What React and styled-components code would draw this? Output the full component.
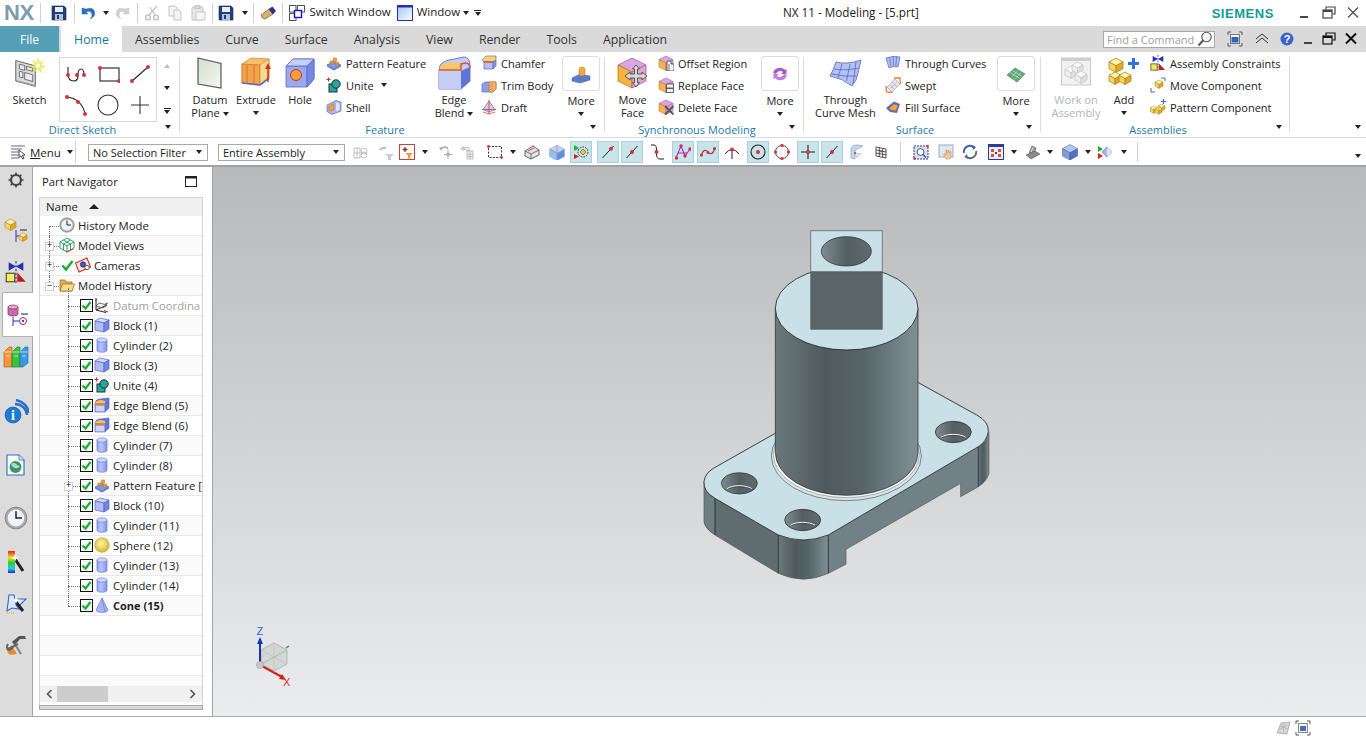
import React from 'react';
import styled, { createGlobalStyle } from 'styled-components';

const GlobalStyle = createGlobalStyle`
    html, body { margin: 0; padding: 0; background: #fff; }
    body { font-family: "Open Sans", "Liberation Sans", sans-serif; font-size: 11px; color: #222; }
    #root { width: 1366px; height: 738px; overflow: hidden; }
`;

const Page = styled.div`
    width: 1366px;
    height: 738px;
    display: flex;
    flex-direction: column;
    background: #fff;
`;

/* ---------- title bar ---------- */
const TitleBar = styled.div`
    height: 26px;
    display: flex;
    align-items: center;
`;
const QuickAccess = styled.div`
    flex: 0 0 783px;
    display: flex;
    align-items: center;
    height: 26px;
`;
const Logo = styled.span`
    width: 40px;
    padding-left: 4px;
    box-sizing: border-box;
    font: bold 22px "Liberation Sans", sans-serif;
    color: #7f9bae;
    letter-spacing: -0.5px;
`;
const Slot = styled.span`
    flex: 0 0 auto;
    display: flex;
    align-items: center;
    justify-content: center;
    width: ${p => p.$w}px;
    margin-left: ${p => p.$ml || 0}px;
`;
const VSep = styled.span`
    flex: 0 0 1px;
    width: 1px;
    height: ${p => p.$h || 20}px;
    background: #d0d0d0;
    margin-left: ${p => p.$ml || 0}px;
`;
const Caret = styled.span`
    flex: 0 0 auto;
    display: inline-block;
    width: 0;
    height: 0;
    border-left: 3.5px solid transparent;
    border-right: 3.5px solid transparent;
    border-top: 4px solid ${p => p.$color || '#222'};
    margin-left: ${p => p.$ml || 0}px;
`;
const QatText = styled.span`
    font-size: 11.5px;
    margin-left: ${p => p.$ml || 0}px;
    padding-bottom: 3px;
    white-space: nowrap;
`;
const MenuCaret = styled.span`
    display: flex;
    flex-direction: column;
    align-items: center;
    margin-left: 5px;
    &::before {
        content: '';
        width: 7px;
        height: 1px;
        background: #222;
        margin-bottom: 1px;
    }
`;
const WindowTitle = styled.span`
    font-size: 11.7px;
    padding-bottom: 2px;
    white-space: nowrap;
`;
const Siemens = styled.span`
    margin-left: auto;
    font: bold 13px "Liberation Sans", sans-serif;
    letter-spacing: 0.55px;
    color: #129a9c;
`;
const WinButtons = styled.div`
    display: flex;
    align-items: center;
    margin-left: 24px;
    margin-right: 6px;
    gap: 10px;
`;

/* ---------- tabs ---------- */
const TabBar = styled.div`
    height: 26px;
    background: #dadada;
    display: flex;
    align-items: stretch;
`;
const FileTab = styled.div`
    width: 59px;
    margin-right: 2px;
    background: #559fb7;
    color: #fff;
    font-size: 12px;
    display: flex;
    align-items: center;
    justify-content: center;
`;
const Tab = styled.div`
    padding: 0 13px;
    display: flex;
    align-items: center;
    font-size: 12.3px;
    color: ${p => (p.$active ? '#14779c' : '#333')};
    background: ${p => (p.$active ? '#fff' : 'transparent')};
    ${p => p.$active && 'width: 61px; box-sizing: border-box; justify-content: center; padding: 0; margin-right: 0;'}
`;
const TabRight = styled.div`
    margin-left: auto;
    display: flex;
    align-items: center;
    padding-right: 8px;
`;
const Search = styled.div`
    width: 112px;
    height: 17px;
    box-sizing: border-box;
    border: 1px solid #a8a8a8;
    background: #fff;
    color: #a0a0a0;
    font-size: 11px;
    display: flex;
    align-items: center;
    justify-content: space-between;
    padding: 0 1px 0 3px;
`;

/* ---------- ribbon ---------- */
const Ribbon = styled.div`
    height: 85px;
    display: flex;
    border-bottom: 1px solid #dcdcdc;
    position: relative;
`;
const Group = styled.section`
    width: ${p => p.$w}px;
    flex: 0 0 auto;
    display: flex;
    flex-direction: column;
    position: relative;
`;
const GroupBody = styled.div`
    height: 70px;
    display: flex;
    align-items: flex-start;
`;
const GroupLabel = styled.div`
    height: 15px;
    line-height: 15px;
    text-align: center;
    padding-right: 14px;
    color: #1c7aa6;
    font-size: 11px;
`;
const Launcher = styled.span`
    position: absolute;
    right: ${p => p.$r || 8}px;
    bottom: 8px;
    display: flex;
`;
const GroupDivider = styled.div`
    flex: 0 0 1px;
    margin: 5px 0 5px;
    background: #dcdcdc;
`;
const BigButton = styled.div`
    width: ${p => p.$w}px;
    margin-left: ${p => p.$ml || 0}px;
    flex: 0 0 auto;
    display: flex;
    flex-direction: column;
    align-items: center;
    padding-top: 5px;
    text-align: center;
    color: ${p => (p.$disabled ? '#b5b5b5' : '#222')};
`;
const BigIcon = styled.div`
    height: 32px;
    margin-bottom: 4px;
    display: flex;
    align-items: center;
    justify-content: center;
`;
const BigLabel = styled.div`
    font-size: 11px;
    line-height: 13px;
    white-space: nowrap;
`;
const SmallColumn = styled.div`
    width: ${p => p.$w}px;
    margin-left: ${p => p.$ml || 0}px;
    flex: 0 0 auto;
    display: flex;
    flex-direction: column;
`;
const SmallRow = styled.div`
    height: 22px;
    display: flex;
    align-items: center;
    gap: 4px;
    font-size: 11px;
    white-space: nowrap;
`;
const Gallery = styled.div`
    width: 98px;
    height: 65px;
    box-sizing: border-box;
    margin-top: 5px;
    border: 1px solid #d8d8d8;
    display: grid;
    grid-template-columns: repeat(3, 1fr);
    grid-template-rows: repeat(2, 1fr);
    align-items: center;
    justify-items: center;
`;
const GalleryScroll = styled.div`
    width: 20px;
    height: 70px;
    display: flex;
    flex-direction: column;
    align-items: center;
    padding-top: 12px;
    box-sizing: border-box;
    gap: 18px;
`;
const MoreBox = styled.div`
    width: 38px;
    height: 35px;
    box-sizing: border-box;
    border: 1px solid #dcdcdc;
    border-radius: 3px;
    margin-bottom: 3px;
    display: flex;
    align-items: center;
    justify-content: center;
`;
const More = styled.div`
    width: 38px;
    margin-left: ${p => p.$ml || 0}px;
    flex: 0 0 auto;
    display: flex;
    flex-direction: column;
    align-items: center;
    padding-top: 4px;
    font-size: 11px;
    line-height: 13px;
`;
const CaretRow = styled.div`
    height: 13px;
    display: flex;
    align-items: center;
    justify-content: center;
`;

/* ---------- selection bar ---------- */
const SelectionBar = styled.div`
    height: 29px;
    box-sizing: border-box;
    padding-top: 1px;
    display: flex;
    align-items: center;
    border-bottom: 2px solid #a3a3a3;
`;
const MenuButton = styled.div`
    width: 75px;
    box-sizing: border-box;
    padding-left: 10px;
    display: flex;
    align-items: center;
    gap: 4px;
    font-size: 11.5px;
    u { text-decoration: underline; }
`;
const FilterSelect = styled.div`
    width: ${p => p.$w}px;
    margin-left: ${p => p.$ml}px;
    height: 17px;
    box-sizing: border-box;
    border: 1px solid #a8a8a8;
    display: flex;
    align-items: center;
    justify-content: space-between;
    padding: 0 5px 0 4px;
    font-size: 11px;
    flex: 0 0 auto;
`;
const ToolSlot = styled(Slot)`
    height: 22px;
    box-sizing: border-box;
    ${p => p.$on && 'background: #c8e4ea; border: 1px solid #a8d2dc;'}
`;
const BarEnd = styled.span`
    margin-left: auto;
    padding-right: 5px;
    padding-top: 8px;
    display: flex;
`;

/* ---------- main ---------- */
const Main = styled.div`
    height: 549px;
    display: flex;
    border-bottom: 1px solid #a8a8a8;
`;
const Rail = styled.div`
    width: 32px;
    flex: 0 0 32px;
    background: #dcdcdc;
    display: flex;
    flex-direction: column;
    border-right: 1px solid #a3a3a3;
    box-sizing: content-box;
`;
const RailItem = styled.div`
    height: ${p => p.$h}px;
    margin-top: ${p => p.$mt}px;
    flex: 0 0 auto;
    display: flex;
    align-items: center;
    justify-content: center;
    box-sizing: border-box;
    ${p => p.$active && `
        background: #fff;
        margin-left: 2px;
        margin-right: -1px;
        border: 1px solid #b0b0b0;
        border-right: 0;
        border-radius: 2px 0 0 2px;
    `}
`;
const Navigator = styled.div`
    width: 180px;
    flex: 0 0 180px;
    background: #fff;
    border-right: 1px solid #a3a3a3;
    display: flex;
    flex-direction: column;
    padding-left: 6px;
    box-sizing: border-box;
`;
const NavHead = styled.div`
    height: 30px;
    box-sizing: border-box;
    padding: 0 15px 2px 3px;
    display: flex;
    align-items: center;
    justify-content: space-between;
    font-size: 11.3px;
`;
const TreeBox = styled.div`
    width: 164px;
    height: 508px;
    box-sizing: border-box;
    border: 1px solid #d4d4d4;
    border-bottom: 0;
    display: flex;
    flex-direction: column;
    overflow: hidden;
`;
const TreeHead = styled.div`
    flex: 0 0 18px;
    box-sizing: border-box;
    padding: 0 0 1px 6px;
    background: #f0f0f0;
    display: flex;
    align-items: center;
    gap: 11px;
    font-size: 11.4px;
`;
const UpCaret = styled.span`
    width: 0;
    height: 0;
    border-left: 5px solid transparent;
    border-right: 5px solid transparent;
    border-bottom: 5px solid #222;
`;
const TreeRows = styled.div`
    flex: 1;
    overflow: hidden;
`;
const TreeRow = styled.div`
    position: relative;
    height: 20px;
    box-sizing: border-box;
    padding-left: ${p => p.$pad}px;
    padding-bottom: 1px;
    display: flex;
    align-items: center;
    white-space: nowrap;
    background: ${p => (p.$alt ? '#fafafa' : '#fff')};
    border-bottom: 1px solid #e9e9e9;
    font-size: ${p => (p.$bold ? 11 : 11.3)}px;
    font-weight: ${p => (p.$bold ? 700 : 400)};
    color: ${p => (p.$muted ? '#a0a0a0' : '#222')};
`;
const RowText = styled.span`
    margin-left: 3px;
`;
const CheckBox = styled.span`
    flex: 0 0 13px;
    height: 13px;
    margin-right: 1px;
    display: flex;
`;
const GuideV = styled.i`
    position: absolute;
    left: ${p => p.$x}px;
    top: ${p => p.$y}px;
    height: ${p => p.$h}px;
    border-left: 1px dotted #777;
`;
const GuideH = styled.i`
    position: absolute;
    left: ${p => p.$x}px;
    top: 10px;
    width: ${p => p.$w}px;
    border-top: 1px dotted #777;
`;
const Expander = styled.span`
    position: absolute;
    left: ${p => p.$x}px;
    top: 6px;
    width: 9px;
    height: 9px;
    box-sizing: border-box;
    border: 1px solid #d0d0d0;
    background: #fff;
    font: 9px/7px "Liberation Mono", monospace;
    color: #000;
    text-align: center;
`;
const ScrollBar = styled.div`
    flex: 0 0 16px;
    margin-bottom: 3px;
    background: #f0f0f0;
    display: flex;
    align-items: center;
    position: relative;
    justify-content: space-between;
    padding: 0 6px;
`;
const ScrollThumb = styled.span`
    position: absolute;
    left: 17px;
    top: 0;
    width: 51px;
    height: 16px;
    background: #cdcdcd;
`;
const SplitBar = styled.div`
    width: 164px;
    height: 5px;
    box-sizing: border-box;
    border: 1px solid #a8a8a8;
    background: #d8d8d8;
`;
const Canvas = styled.div`
    flex: 1;
    background: linear-gradient(#b8b9bb, #ebecee);
    overflow: hidden;
    svg { display: block; }
`;
const StatusBar = styled.div`
    flex: 1;
    display: flex;
    align-items: center;
    justify-content: flex-end;
    gap: 4px;
    padding-right: 55px;
`;

/* ---------- icon helpers ---------- */
const S = ({ s = 16, v, children }) => (
    <svg width={s} height={s} viewBox={`0 0 ${v || s} ${v || s}`} style={{ flex: '0 0 auto', display: 'block' }}>{children}</svg>
);

const BLUE = ['#ccd6fa', '#a7b5f2', '#7286e0', '#5566c4'];
const YEL = ['#fff3b0', '#f6d85e', '#e0a92c', '#b5851c'];

const Cube = ({ x = 0, y = 0, s = 12, c = BLUE, sw = 0.8 }) => {
    const [t, l, r, e] = c;
    const a = s * 0.28, m = s * 0.56, h = s * 1.04;
    return (
        <g stroke={e} strokeWidth={sw} strokeLinejoin="round">
            <path fill={t} d={`M${x} ${y + a}L${x + s / 2} ${y}L${x + s} ${y + a}L${x + s / 2} ${y + m}Z`} />
            <path fill={l} d={`M${x} ${y + a}L${x + s / 2} ${y + m}L${x + s / 2} ${y + h}L${x} ${y + h - a}Z`} />
            <path fill={r} d={`M${x + s} ${y + a}L${x + s / 2} ${y + m}L${x + s / 2} ${y + h}L${x + s} ${y + h - a}Z`} />
        </g>
    );
};

const Dot = ({ x, y, r = 2 }) => <circle cx={x} cy={y} r={r} fill="#d6323a" />;

/* small ribbon icons */
const PatternIcon = () => (
    <S>
        <path d="M1 10L8 6.5L15 10L8 14Z" fill="#7f9be8" stroke="#4a63c0" strokeWidth=".7" />
        <path d="M1 10v1.5L8 15.5l7-4V10L8 14Z" fill="#5f7bd8" />
        <rect x="4" y="6" width="3" height="3" fill="#ec9a2e" stroke="#b96a14" strokeWidth=".5" />
        <rect x="7.5" y="3" width="3" height="3" fill="#f0a63a" stroke="#b96a14" strokeWidth=".5" />
        <rect x="9.5" y="7" width="3" height="3" fill="#ec9a2e" stroke="#b96a14" strokeWidth=".5" />
    </S>
);
const UniteIcon = () => (
    <S>
        <path d="M0.5 2.5h4M2.5 .5v4" stroke="#e02020" strokeWidth="1" />
        <rect x="3" y="7" width="8" height="8" fill="#2da39a" stroke="#0c3a3a" />
        <circle cx="10" cy="7" r="4.2" fill="#2da39a" stroke="#0c3a3a" />
    </S>
);
const ShellIcon = () => (
    <S>
        <path d="M1 6L10 1.5L15 3V12L6 15.5L1 12.5Z" fill="#a9b6ef" stroke="#5a6cc8" strokeWidth=".7" />
        <path d="M3 7L8 4.5V11L3 12Z" fill="#f1a23c" stroke="#b96a14" strokeWidth=".5" />
        <path d="M10 3.5L13.5 4.5V11L10 12.5Z" fill="#dfe4fb" />
    </S>
);
const ChamferIcon = () => (
    <S>
        <path d="M1 5L5 1H15V5L12 7H3Z" fill="#f5d767" stroke="#5a6cc8" strokeWidth=".7" />
        <path d="M3 7H12V14H3Z" fill="#b6c2f3" stroke="#5a6cc8" strokeWidth=".7" />
        <path d="M3 7H12" stroke="#e8442e" strokeWidth="1.2" />
        <path d="M12 7L15 5V11L12 14Z" fill="#8496e4" stroke="#5a6cc8" strokeWidth=".7" />
    </S>
);
const TrimIcon = () => (
    <S>
        <path d="M1 7L4 5H15V12L12 15H1Z" fill="#8c9ee6" stroke="#5a6cc8" strokeWidth=".7" />
        <path d="M8 5H15V12L12 15H8Z" fill="#f4b264" stroke="#c8762c" strokeWidth=".7" />
        <path d="M9 8V14M11 7V14" stroke="#d0503a" strokeWidth=".6" strokeDasharray="1 1" />
    </S>
);
const DraftIcon = () => (
    <S>
        <path d="M8 2L2 10.5L8 13L14 10.5Z" fill="#c5cff7" stroke="#5a6cc8" strokeWidth=".7" />
        <path d="M8 1V15M1 10.5h14" stroke="#e0503a" strokeWidth="1" fill="none" />
        <path d="M2 13L8 15L14 13" stroke="#e0503a" strokeWidth=".8" fill="none" />
    </S>
);
const SyncCube = () => (
    <g>
        <path d="M1 4.5L8 1L15 4.5L8 8Z" fill="#d8a6e0" stroke="#a05cb0" strokeWidth=".6" />
        <path d="M1 4.5L8 8V15.5L1 12Z" fill="#f6b24c" stroke="#c8762c" strokeWidth=".6" />
        <path d="M15 4.5L8 8V15.5L15 12Z" fill="#e6a2c0" stroke="#a05cb0" strokeWidth=".6" />
    </g>
);
const OffsetIcon = () => (
    <S>
        <SyncCube />
        <path d="M9 6h4v3h3v7H9Z" fill="#f2f2f2" stroke="#444" strokeWidth=".8" />
        <path d="M11 9v7" stroke="#444" strokeWidth=".7" />
    </S>
);
const ReplaceIcon = () => (
    <S>
        <SyncCube />
        <rect x="8.5" y="7" width="7" height="4" fill="#eee" stroke="#444" strokeWidth=".8" />
        <rect x="8.5" y="11.5" width="7" height="4" fill="#eee" stroke="#444" strokeWidth=".8" />
    </S>
);
const DeleteIcon = () => (
    <S>
        <SyncCube />
        <path d="M7 7L15.5 15.5M15.5 7L7 15.5" stroke="#555" strokeWidth="1.8" />
    </S>
);
const ThroughCurvesIcon = () => (
    <S>
        <path d="M1 3Q8 .5 15 2L13 12Q8 10.5 4 13Z" fill="#b4c0f2" stroke="#5a6cc8" strokeWidth=".8" />
        <path d="M4.5 2.2L6 11.5M8 1.6L8.6 11M11.5 1.6L10.8 11" stroke="#5a6cc8" strokeWidth=".8" />
    </S>
);
const SweptIcon = () => (
    <S>
        <path d="M2 10L10 2L15 7L7 15Z" fill="#e4e4ea" stroke="#a8a8b8" strokeWidth=".7" />
        <path d="M4.5 7.5L9.5 12.5M7 5L12 10M6 11L11.5 5.5" stroke="#b0b0c0" strokeWidth=".7" />
        <path d="M1 9L1.5 15L7.5 15.5M9 1L15 1L15.5 7" stroke="#ea7a2a" strokeWidth="1.3" fill="none" />
    </S>
);
const FillIcon = () => (
    <S>
        <path d="M1 9L9 2.5L15 5L12 14L5 13Z" fill="#5a6cc8" />
        <path d="M4 9.5L9 5L13 6.5L11 11.5L6 11Z" fill="#f2a93a" stroke="#b96a14" strokeWidth=".5" />
    </S>
);
const ConstraintsIcon = ({ s = 18 }) => (
    <S s={s} v={18}>
        <path d="M3 1L9 4.5L15 1V8L9 4.5L3 8Z" fill="#2430b8" />
        <path d="M9 0V18" stroke="#2430b8" strokeWidth=".9" strokeDasharray="2 1.2" />
        <rect x="1" y="10" width="7" height="7" fill="#f7ec5a" stroke="#333" strokeWidth=".8" />
        <path d="M10 9.5L17 17H10Z" fill="#c41a1a" />
    </S>
);
const MoveCompIcon = () => (
    <S>
        <Cube x={5} y={3} s={8} c={YEL} sw={0.6} />
        <path d="M1 11v4h4" stroke="#3a62d8" strokeWidth="1" fill="none" />
        <path d="M11 1h4v3" stroke="#3a62d8" strokeWidth="1" fill="none" />
    </S>
);
const PatternCompIcon = () => (
    <S>
        <Cube x={0} y={7} s={7} c={YEL} sw={0.5} />
        <Cube x={5} y={8} s={7} c={YEL} sw={0.5} />
        <Cube x={8} y={5} s={7} c={YEL} sw={0.5} />
        <path d="M11 2.5h5M13.5 0v5" stroke="#2c74e0" strokeWidth="1.2" />
    </S>
);

/* large ribbon icons */
const SketchIcon = () => (
    <S s={32} v={36}>
        <path d="M2 4L24 10V33L2 27Z" fill="#d9dcda" stroke="#555" strokeWidth="1" />
        <path d="M2 27L4 26.5L24 31.5V33Z" fill="#999" />
        <path d="M6 8L12 9.6V15L6 13.4ZM14 10.5L21 12.5V16L14 14.3ZM6 16L10 17V23.5L6 22.5ZM12 17.5L21 20V27.5L12 25Z" fill="#ececea" stroke="#555" strokeWidth=".9" />
        <path d="M27 1L28 7L33 4L30 9L35 11L29.5 12L31 18L27 13L23 17L24.5 12L18 11L24 9L21 4L26 7Z" fill="#f7ec52" stroke="#e6cf2a" strokeWidth=".4" />
        <circle cx="27" cy="9.5" r="2.5" fill="#fff" />
    </S>
);
const DatumIcon = () => (
    <S s={32} v={32}>
        <defs>
            <linearGradient id="dp" x1="0" y1="0" x2="1" y2="1">
                <stop offset="0" stopColor="#cfe0cd" />
                <stop offset="1" stopColor="#f3f7f2" />
            </linearGradient>
        </defs>
        <path d="M4 1L27 6.5V31L4 27Z" fill="url(#dp)" stroke="#555" strokeWidth="1.2" />
    </S>
);
const ExtrudeIcon = () => (
    <S s={34} v={34}>
        <path d="M3 8L12 2L30 3V22L22 29L3 27Z" fill="#f5c06a" stroke="#cf8a3c" strokeWidth=".8" />
        <path d="M3 8L21 9V29L3 27Z" fill="#f2a44a" stroke="#cf7a2c" strokeWidth=".8" />
        <path d="M21 9L30 3V22L21 29Z" fill="#f7d98e" stroke="#cf8a3c" strokeWidth=".8" />
        <path d="M8 9V27M15 9V28" stroke="#e8603a" strokeWidth=".9" />
        <path d="M3 27L21 29L30 22" stroke="#5a6cc8" strokeWidth="1.6" fill="none" />
        <path d="M29 26V11" stroke="#c8341e" strokeWidth="1.5" />
        <path d="M26 13L29 7L32 13Z" fill="#c8341e" />
    </S>
);
const HoleIcon = () => (
    <S s={32} v={32}>
        <path d="M2 9L9 2H30V22L23 30H2Z" fill="#99a8ef" stroke="#5a6cc8" strokeWidth=".8" />
        <path d="M2 9H23V30" fill="none" stroke="#5a6cc8" strokeWidth=".8" />
        <path d="M2 9L9 2H30L23 9Z" fill="#c7d0f7" stroke="#5a6cc8" strokeWidth=".8" />
        <path d="M23 9L30 2V22L23 30Z" fill="#7488e0" stroke="#5a6cc8" strokeWidth=".8" />
        <circle cx="12" cy="18" r="5.5" fill="#f3a13a" stroke="#c8341e" strokeWidth="1" />
    </S>
);
const EdgeBlendIcon = () => (
    <S s={34} v={34}>
        <path d="M2 14Q2 6 12 4L27 1Q33 1 33 10V25L24 33H2Z" fill="#c3cdf6" stroke="#5a6cc8" strokeWidth=".9" />
        <path d="M2 14Q3 7 12 6L24 7V14Z" fill="#f6c86a" />
        <path d="M2 14H24V8Q33 5 33 12" fill="none" stroke="#dd5a3a" strokeWidth="1.6" />
        <path d="M24 15V33L33 25V11Z" fill="#5f74d8" />
        <path d="M2 15H24V33H2Z" fill="#c5cdf5" />
    </S>
);
const FeatureMoreIcon = () => (
    <S s={20} v={20}>
        <path d="M1 14L9 10L19 12V16L9 19L1 17Z" fill="#5a7bc8" stroke="#3d5aa8" strokeWidth=".5" />
        <rect x="8" y="3" width="6" height="9" rx="3" fill="#f4a83c" stroke="#cf7a2c" strokeWidth=".6" />
    </S>
);
const SyncMoreIcon = () => (
    <S s={18} v={18}>
        <path d="M2 8A7 7 0 0 1 14 5L15.5 3.5V9H10L12 7A4.5 4.5 0 0 0 5 9Z" fill="#a45cc8" />
        <path d="M16 10A7 7 0 0 1 4 13L2.5 14.5V9H8L6 11A4.5 4.5 0 0 0 13 9Z" fill="#c77bd8" />
    </S>
);
const SurfaceMoreIcon = () => (
    <S s={20} v={20}>
        <path d="M1 11L9 4L19 10L11 18Z" fill="#5fa878" stroke="#397a52" strokeWidth=".6" />
        <path d="M4 8.5L14 14.5M6.5 6.5L16.5 12.5M6 13L12 6.5M8.5 15.5L15 8.5" stroke="#cfe8d4" strokeWidth=".6" />
    </S>
);
const MoveFaceIcon = () => (
    <S s={32} v={32}>
        <path d="M1 8L15 1L29 8L15 15Z" fill="#d8a6e2" stroke="#a05cb0" strokeWidth=".8" />
        <path d="M1 8L15 15V31L1 24Z" fill="#f5b33e" stroke="#b5781c" strokeWidth=".8" />
        <path d="M29 8L15 15V31L29 24Z" fill="#e8a5c8" stroke="#a05cb0" strokeWidth=".8" />
        <path d="M19 8L22.5 12H20.5V17H25V15L30 19L25 23V21H20.5V25.5H22.5L19 30L15.5 25.5H17.5V21H13V23L8 19L13 15V17H17.5V12H15.5Z" fill="#d8d8d8" stroke="#555" strokeWidth="1" />
    </S>
);
const CurveMeshIcon = () => (
    <S s={34} v={34}>
        <path d="M7 6Q18 9 32 4Q30 14 27 24L23 30Q13 22 1 20Q5 13 7 6Z" fill="#b5c1f3" stroke="#6070c8" strokeWidth=".9" />
        <path d="M4.5 13Q16 15 30 12M2.5 18Q16 21 27 20M13 8L9 22M21 8L17.5 25M27 6L24 28" stroke="#5f70c8" strokeWidth=".9" fill="none" />
    </S>
);
const WorkOnIcon = () => (
    <S s={32} v={32}>
        <rect x="1.5" y="1" width="29" height="27" fill="#f1f1f1" stroke="#c9c9c9" strokeWidth="1" />
        <rect x="1.5" y="1" width="29" height="3" fill="#cdcdcd" />
        <Cube x={5} y={9} s={12} c={['#fafafa', '#efefef', '#dfdfdf', '#c8c8c8']} />
        <Cube x={12} y={5} s={11} c={['#fafafa', '#efefef', '#dfdfdf', '#c8c8c8']} />
        <Cube x={15} y={14} s={12} c={['#fafafa', '#efefef', '#dfdfdf', '#c8c8c8']} />
    </S>
);
const AddIcon = () => (
    <S s={32} v={32}>
        <Cube x={1} y={1} s={14} c={YEL} />
        <Cube x={1} y={15} s={12} c={YEL} />
        <Cube x={11} y={15} s={12} c={YEL} />
        <path d="M20 6.5H31M25.5 1V12" stroke="#2c74e0" strokeWidth="3" />
    </S>
);

/* sketch gallery */
const ProfileG = () => (
    <S s={24}>
        <path d="M6 6V13Q6 20 12 20Q16 20 16 14Q16 8 19 8Q22 8 22 14" fill="none" stroke="#222" strokeWidth="1.1" transform="translate(-2 -1)" />
        <Dot x={4} y={13} /><Dot x={13} y={13} /><Dot x={20} y={13} />
    </S>
);
const RectG = () => (
    <S s={24}>
        <rect x="4" y="6" width="19" height="13" fill="none" stroke="#222" strokeWidth="1.1" />
        <Dot x={4} y={6} /><Dot x={23} y={19} />
    </S>
);
const LineG = () => (
    <S s={24}>
        <path d="M4 19L20 5" stroke="#222" strokeWidth="1.1" />
        <Dot x={4} y={19} /><Dot x={20} y={5} />
    </S>
);
const ArcG = () => (
    <S s={24}>
        <path d="M3 4Q18 6 21 21" fill="none" stroke="#222" strokeWidth="1.1" />
        <Dot x={3} y={4} /><Dot x={14} y={9} /><Dot x={21} y={21} />
    </S>
);
const CircleG = () => (
    <S s={24}><circle cx="12" cy="12" r="10" fill="none" stroke="#333" strokeWidth="1.1" /></S>
);
const PlusG = () => (
    <S s={24}><path d="M3 12H21M12 3V21" stroke="#333" strokeWidth="1.1" /></S>
);

/* title bar icons */
const SaveIcon = () => (
    <S>
        <path d="M1 1H13L15 3V15H1Z" fill="#1f3f7a" stroke="#14305f" strokeWidth=".6" />
        <rect x="4" y="2" width="8" height="5" fill="#e9eef6" />
        <rect x="4" y="9" width="8" height="6" fill="#b5c2d8" />
        <rect x="6" y="10" width="2" height="4" fill="#1f3f7a" />
    </S>
);
const UndoIcon = ({ off }) => (
    <S>
        <g transform={off ? 'translate(16 0) scale(-1 1)' : undefined}>
            <path d="M2 3V9H8L6 7Q11 5 12 9Q12.5 11.5 10 14Q16 11.5 14.5 6.5Q13 1.5 6 4Z" fill={off ? '#d2d2d2' : '#2a6fc8'} stroke={off ? '#bbb' : '#1e5aa8'} strokeWidth=".4" />
        </g>
    </S>
);
const CutIcon = () => (
    <S>
        <path d="M5 10L13 1M11 10L6 2" stroke="#c4c4c4" strokeWidth="1.2" />
        <circle cx="4" cy="12.5" r="2.4" fill="none" stroke="#bdbdbd" strokeWidth="1.2" />
        <circle cx="12" cy="12.5" r="2.4" fill="none" stroke="#bdbdbd" strokeWidth="1.2" />
    </S>
);
const CopyIcon = () => (
    <S>
        <path d="M2 1H8L10 3V11H2Z" fill="#f3f3f3" stroke="#c4c4c4" />
        <path d="M7 5H12L14 7V15H7Z" fill="#f3f3f3" stroke="#c4c4c4" />
    </S>
);
const PasteIcon = () => (
    <S>
        <rect x="2" y="2" width="11" height="13" rx="1" fill="#e8e8e8" stroke="#c4c4c4" />
        <rect x="5" y="0.5" width="5" height="3" fill="#d8d8d8" stroke="#c4c4c4" />
        <rect x="6" y="7" width="9" height="8" fill="#f6f6f6" stroke="#c4c4c4" />
    </S>
);
const EraserIcon = () => (
    <S>
        <path d="M1 10L9 4L13 9L5 14Q2 14 1 10Z" fill="#d6b074" stroke="#76572a" strokeWidth=".7" />
        <path d="M9 4L12.5 2L15.5 6L13 9Z" fill="#2436a8" stroke="#141f70" strokeWidth=".6" />
    </S>
);
const SwitchWinIcon = () => (
    <S>
        <rect x=".5" y=".5" width="6.5" height="6.5" fill="#fff" stroke="#555" />
        <rect x="8.5" y=".5" width="7" height="6.5" fill="#fff" stroke="#555" />
        <rect x=".5" y="8.5" width="6.5" height="7" fill="#fff" stroke="#555" />
        <rect x="5.5" y="5.5" width="7" height="7" fill="#fff" stroke="#1414d8" strokeWidth="1.4" />
    </S>
);
const WindowIcon = () => (
    <S>
        <defs>
            <linearGradient id="wi" x1="0" y1="0" x2="1" y2="1">
                <stop offset="0" stopColor="#9fc4ee" />
                <stop offset="1" stopColor="#fff" />
            </linearGradient>
        </defs>
        <rect x=".5" y=".5" width="15" height="15" fill="url(#wi)" stroke="#1c30b8" />
        <rect x=".5" y=".5" width="15" height="2" fill="#1c30b8" />
    </S>
);
const MinIcon = ({ y = 10 }) => <S s={14}><rect x="2" y={y} width="8" height="2" fill="#444" /></S>;
const RestoreIcon = ({ c = '#444' }) => (
    <S s={14}>
        <path d="M4 3.5V1H13V8H10.5" fill="none" stroke={c} strokeWidth="1.2" />
        <rect x="1" y="4" width="9" height="8" fill="none" stroke={c} strokeWidth="1.2" />
        <rect x="1" y="4" width="9" height="2" fill={c} />
    </S>
);
const CloseIcon = ({ c = '#555', w = 1.4 }) => (
    <S s={14}><path d="M2 1.5L12 11.5M12 1.5L2 11.5" stroke={c} strokeWidth={w} /></S>
);
const MagnifierIcon = () => (
    <S>
        <circle cx="9.5" cy="6" r="4.7" fill="#f2f5f7" stroke="#555" strokeWidth="1.1" />
        <path d="M6 9.5L1.5 14.5" stroke="#555" strokeWidth="2" />
    </S>
);
const FullIcon = () => (
    <S>
        <path d="M1 4V1H4M12 1H15V4M1 12V15H4M12 15H15V12" stroke="#555" fill="none" />
        <rect x="3.5" y="3.5" width="9" height="9" fill="#f0f4fa" stroke="#777" />
        <rect x="4.5" y="6" width="7" height="5.5" fill="#2f62b8" />
    </S>
);
const ChevUpIcon = () => (
    <S s={14}>
        <path d="M1 7L7 2L13 7M1 11L7 6L13 11" stroke="#333" fill="none" strokeWidth="1" />
    </S>
);
const HelpIcon = () => (
    <S s={14}>
        <circle cx="7" cy="7" r="6.5" fill="#3a62d0" />
        <text x="7" y="11" fontSize="11" fontWeight="700" textAnchor="middle" fill="#fff" fontFamily="Liberation Sans">?</text>
    </S>
);

/* selection bar icons */
const MenuIco = () => (
    <S>
        <path d="M1 2H15M1 5H12M1 8H9M1 11H9M1 14H9" stroke="#667" strokeWidth="1" />
        <path d="M9 6L15 11L12.4 11.2L14 14.5L12.6 15L11 11.8L9 13.5Z" fill="#fff" stroke="#222" strokeWidth=".8" />
    </S>
);
const GreyWire = () => (
    <S>
        <path d="M1 4H7V14H1ZM1 9H7M4 4V14" stroke="#c0c0c0" fill="none" />
        <circle cx="11" cy="7" r="3" fill="none" stroke="#c0c0c0" />
        <circle cx="11" cy="11" r="3" fill="none" stroke="#c0c0c0" />
    </S>
);
const GreyFunnelIcon = () => (
    <S>
        <path d="M1 6Q3 3 7 4" stroke="#bbb" strokeWidth="2" fill="none" />
        <path d="M6 10H15L12 13V16H9V13Z" fill="#ccc" />
    </S>
);
const BoxedFilterIcon = () => (
    <S>
        <rect x=".5" y=".5" width="15" height="15" fill="#fff" stroke="#c84040" />
        <path d="M6 3V8M3.5 5.5H8.5" stroke="#444" />
        <circle cx="6" cy="5.5" r="1.5" fill="none" stroke="#c84040" />
        <path d="M6.5 9H14L11.5 11.5V14.5H9V11.5Z" fill="#eba12a" />
    </S>
);
const GreyArrowIcon = () => (
    <S>
        <path d="M3 5Q7 1 10 5" stroke="#aaa" strokeWidth="1.5" fill="none" />
        <path d="M1 3L3 7L5 4Z" fill="#aaa" />
        <path d="M10 6V15M6 10.5H14.5" stroke="#aaa" />
        <circle cx="10" cy="10.5" r="1.5" fill="none" stroke="#aaa" />
    </S>
);
const GreyBoxes = () => (
    <S>
        <path d="M1 5L4 2L7 4L5 7Z" fill="#ccc" />
        <path d="M5 4L9 3L11 6L8 7ZM8 7H14V15H8Z" stroke="#c0c0c0" fill="#eee" />
        <path d="M8 10H14M8 12.5H14M11 7V15" stroke="#c0c0c0" />
    </S>
);
const DashedIcon = () => (
    <S>
        <rect x="1.5" y="2.5" width="13" height="11" fill="none" stroke="#333" strokeDasharray="2 1.4" />
        <Dot x={1.5} y={2.5} r={1.4} /><Dot x={14.5} y={13.5} r={1.4} />
    </S>
);
const BoxGreyIcon = () => (
    <S>
        <path d="M1 7L9 2L15 6V11L7 15L1 12Z" fill="#e4e4e4" stroke="#555" strokeWidth=".9" />
        <path d="M1 7L7 10V15M7 10L15 6" stroke="#555" strokeWidth=".8" fill="none" />
        <path d="M4 7L10 4" stroke="#d04030" strokeWidth="1" />
    </S>
);
const ViewCubeIcon = () => (
    <S>
        <Cube x={0.5} y={1} s={15} c={['#b7d5f5', '#8fc0ee', '#5f8edd', '#7aa3d8']} sw={0.5} />
        <path d="M8 1V9M1 5L8 9" stroke="#e26a6a" strokeWidth=".6" />
    </S>
);
const SnapAllIcon = () => (
    <S>
        <path d="M1 1L6 4L1 7Z" fill="#24b030" />
        <path d="M1 10L6 12.5L1 15Z" fill="#d82020" />
        <circle cx="10" cy="8" r="5" fill="none" stroke="#333" strokeDasharray="1.6 1.2" />
        <path d="M10 5L13 8L10 11L7 8Z" fill="#f0c828" stroke="#333" strokeWidth=".5" />
    </S>
);
const SnapLine = ({ k = 'end' }) => (
    <S>
        <path d="M2.5 14L13.5 2" stroke="#222" strokeWidth="1" />
        {k === 'end' ? <Dot x={11} y={4.7} /> : <Dot x={8} y={8} />}
    </S>
);
const SnapCurveIcon = () => (
    <S>
        <path d="M2 1H5Q7.5 1 7.5 6V10Q7.5 15 11 15H15" stroke="#222" fill="none" />
        <Dot x={7.5} y={8} />
    </S>
);
const ZigIcon = () => (
    <S>
        <path d="M1 14L6 2L10 12L15 5" stroke="#a030c0" fill="none" strokeWidth="1.1" />
        <path d="M3 9H12" stroke="#a030c0" />
        <Dot x={6} y={2} r={1.7} /><Dot x={1.5} y={14} r={1.7} /><Dot x={10} y={12} r={1.7} /><Dot x={15} y={5} r={1.7} />
    </S>
);
const WaveIcon = () => (
    <S>
        <path d="M1 12Q4 3 8 8T15 4" stroke="#a03030" fill="none" strokeWidth="1.1" />
        <Dot x={1.5} y={11} r={1.6} /><Dot x={8} y={8.5} r={1.6} /><Dot x={14.5} y={4.5} r={1.6} />
    </S>
);
const TangentIcon = () => (
    <S>
        <path d="M1 10Q8 1 15 10" stroke="#222" fill="none" />
        <path d="M8 6V15" stroke="#222" />
        <Dot x={8} y={5.6} />
    </S>
);
const TargetIcon = () => (
    <S><circle cx="8" cy="8" r="7" fill="none" stroke="#222" strokeWidth="1.1" /><Dot x={8} y={8} /></S>
);
const QuadIcon = () => (
    <S>
        <circle cx="8" cy="8" r="6.5" fill="none" stroke="#444" />
        <Dot x={8} y={1.5} r={1.6} /><Dot x={14.5} y={8} r={1.6} /><Dot x={8} y={14.5} r={1.6} /><Dot x={1.5} y={8} r={1.6} />
    </S>
);
const CrossIcon = () => (
    <S><path d="M1 8H15M8 1V15" stroke="#222" strokeWidth="1.1" /><Dot x={8} y={8} /></S>
);
const SurfPointIcon = () => (
    <S>
        <path d="M3 14V5Q3 1 10 1L15 2L10 4.5Q7 5 7 9L7 15Z" fill="#c5d7ec" stroke="#8ba8c8" strokeWidth=".8" />
        <path d="M7 9L13 10L9 14Z" fill="#e8eef5" stroke="#8ba8c8" strokeWidth=".6" />
        <Dot x={7} y={9} r={1} />
    </S>
);
const GridPtIcon = () => (
    <S>
        <path d="M3 3L13 5V14L3 12ZM3 6L13 8M3 9L13 11M6.3 3.7V12.7M9.7 4.3V13.3" stroke="#444" fill="none" strokeWidth=".9" />
        <Dot x={8} y={7.5} r={1} />
    </S>
);
const ZoomRegionIcon = () => (
    <S>
        <rect x="1" y="2" width="14" height="13" fill="#d5e2f3" stroke="#2a3aa0" strokeDasharray="2 1" />
        <circle cx="7.5" cy="8" r="3.4" fill="#fff" stroke="#555" />
        <path d="M10 10.5L13 13.5" stroke="#555" strokeWidth="1.5" />
        <Dot x={14.5} y={2} r={1.3} /><Dot x={1.5} y={14.5} r={1.3} />
    </S>
);
const PanIcon = () => (
    <S>
        <rect x="1" y="1" width="14" height="12" fill="#dfe7f1" stroke="#9aaac0" />
        <path d="M8 15L5.5 10L7 9.5L8 11V6H9V9H10V6.5H11V9H12V7.5H13V12L12 15Z" fill="#f3cba0" stroke="#b8864c" strokeWidth=".5" />
    </S>
);
const RotateIcon = () => (
    <S>
        <path d="M2 9A6 6 0 0 1 12 3.5" stroke="#3a5ea8" strokeWidth="1.8" fill="none" />
        <path d="M14 7A6 6 0 0 1 4 12.5" stroke="#606a78" strokeWidth="1.8" fill="none" />
        <path d="M10 1L14 3L11 6Z" fill="#3a5ea8" /><path d="M6 15L2 13L5 10Z" fill="#606a78" />
    </S>
);
const OrientIcon = () => (
    <S>
        <rect x=".5" y=".5" width="15" height="15" fill="#e8eefa" stroke="#2c3a98" />
        <rect x=".5" y=".5" width="15" height="2.5" fill="#2c3a98" />
        <path d="M3 5h3v3H3ZM10 5h3v3h-3ZM3 10h3v3H3ZM10 10h3v3h-3Z" fill="#e04a2a" />
        <rect x="7" y="8" width="2" height="2" fill="#2c3a98" />
    </S>
);
const ShadeIcon = () => (
    <S>
        <path d="M1 11L10 7L15 10L6 15Z" fill="#8a8a8a" stroke="#555" strokeWidth=".6" />
        <path d="M4 9L7 2L11 4L10 7Z" fill="#9c9c9c" stroke="#555" strokeWidth=".6" />
        <path d="M6 8L8 3.500" stroke="#e0e0e0" />
    </S>
);
const BigCubeIcon = () => (
    <S>
        <Cube x={0.5} y={0.5} s={15} c={['#b3c8ea', '#7f9dd4', '#4f72b8', '#3c5a98']} sw={0.5} />
    </S>
);
const RenderModeIcon = () => (
    <S>
        <path d="M1 2L6 5L1 8Z" fill="#24a830" /><path d="M1 9L6 12L1 15Z" fill="#d82020" />
        <path d="M5 8L10 3L15 8L10 13Z" fill="#a8b8e8" stroke="#6070c0" strokeWidth=".7" />
        <path d="M10 3L15 8L10 13Z" fill="#dfe5f6" />
    </S>
);

/* tree icons */
const ClockIcon = ({ s = 16 }) => (
    <S s={s} v={16}>
        <circle cx="8" cy="8" r="7.3" fill="#a9a9a9" stroke="#777" strokeWidth=".5" />
        <circle cx="8" cy="8" r="5.6" fill="#eef3fa" />
        <path d="M8 3.5V8H12" stroke="#222" strokeWidth="1" fill="none" />
    </S>
);
const ViewsIcon = () => (
    <S>
        <path d="M1 5L8 1L15 5V11L8 15L1 11Z M1 5L8 9L15 5M8 9V15M4.5 3L11.5 7V13M11.5 3L4.5 7V13" fill="none" stroke="#1e9a5a" strokeWidth=".9" />
        <path d="M7 15L14 12" stroke="#e03a2a" strokeWidth="1.2" />
    </S>
);
const CameraIcon = () => (
    <S>
        <path d="M0.500 6L12 1L15.500 10L4 15Z" fill="#fbe9e4" stroke="#d8301e" strokeWidth="1.1" />
        <circle cx="8" cy="7.500" r="2.7" fill="#3a5ac8" stroke="#222" strokeWidth=".6" />
        <circle cx="12" cy="10.500" r="2.200" fill="#fff" stroke="#222" strokeWidth=".7" />
    </S>
);
const FolderIcon = () => (
    <S>
        <path d="M1 3H6L7 5H13V14H1Z" fill="#e8b048" stroke="#8c6a20" strokeWidth=".7" />
        <path d="M3.5 7H15.5L13 14H1Z" fill="#f8d98a" stroke="#8c6a20" strokeWidth=".7" />
    </S>
);
const DatumCsysIcon = () => (
    <S>
        <path d="M2 3V13M2 13L13 8M2 13L12 15.5" stroke="#222" strokeWidth="1" />
        <path d="M5 6L13 8L9 11L2 9Z" fill="none" stroke="#444" strokeWidth=".8" />
        <path d="M2 1V4" stroke="#2424c8" strokeWidth="1.2" />
        <path d="M10 13.5L14 15" stroke="#d82020" strokeWidth="1.2" />
        <path d="M11 7L14 6" stroke="#20a030" strokeWidth="1.2" />
    </S>
);
const BlockIcon = () => (
    <S>
        <g stroke="#5566c4" strokeWidth=".7" strokeLinejoin="round">
            <path d="M1 4L6 1L15 3L10 6Z" fill="#d2dafb" />
            <path d="M1 4L10 6V15L1 13Z" fill="#b0bdf5" />
            <path d="M10 6L15 3V12L10 15Z" fill="#7186e0" />
        </g>
    </S>
);
const CylinderIcon = () => (
    <S>
        <defs>
            <linearGradient id="tc">
                <stop offset="0" stopColor="#8d9ff0" />
                <stop offset=".4" stopColor="#bac6f8" />
                <stop offset="1" stopColor="#8092ea" />
            </linearGradient>
        </defs>
        <path d="M3 3V13A5 2.2 0 0 0 13 13V3Z" fill="url(#tc)" stroke="#6a7cd8" strokeWidth=".7" />
        <ellipse cx="8" cy="3" rx="5" ry="2.1" fill="#d0d8fa" stroke="#6a7cd8" strokeWidth=".7" />
    </S>
);
const EdgeBlendSmall = () => (
    <S>
        <path d="M1 6Q2 2 6 2L15 1V11L11 15H1Z" fill="#5f78d8" stroke="#4a5cb8" strokeWidth=".6" />
        <path d="M1 6Q3 3 7 3L11 4V8H1Z" fill="#f6c462" />
        <path d="M1 7H11" stroke="#e04a2a" strokeWidth="1.2" />
        <rect x="1.5" y="8.5" width="9" height="6" fill="#cdd5f6" />
    </S>
);
const SphereIcon = () => (
    <S>
        <defs>
            <radialGradient id="sph" cx=".45" cy=".4" r=".6">
                <stop offset="0" stopColor="#fff6b0" />
                <stop offset="1" stopColor="#d8b628" />
            </radialGradient>
        </defs>
        <circle cx="8" cy="8" r="7.3" fill="url(#sph)" stroke="#a88c20" strokeWidth=".5" />
    </S>
);
const ConeIcon = () => (
    <S>
        <path d="M8 1L2 13A6 2.4 0 0 0 14 13Z" fill="#a6b4f3" stroke="#6a7cd8" strokeWidth=".7" />
        <path d="M8 1L11 15" stroke="#6a7cd8" strokeWidth="1.5" opacity=".5" />
    </S>
);
const GreenCheck = () => (
    <svg width="13" height="13" viewBox="0 0 13 13" style={{ display: 'block' }}>
        <rect x=".5" y=".5" width="12" height="12" fill="#fff" stroke="#111" />
        <path d="M2.5 6.5L5.5 9.5L10.5 3" stroke="#10b030" strokeWidth="2.2" fill="none" />
    </svg>
);
const BareCheck = () => (
    <svg width="13" height="13" viewBox="0 0 13 13" style={{ display: 'block' }}>
        <path d="M1.5 6.5L5 10.5L11.5 2" stroke="#10b030" strokeWidth="2.4" fill="none" />
    </svg>
);

/* rail icons */
const GearIcon = () => (
    <S>
        <circle cx="8" cy="8" r="5" fill="none" stroke="#444" strokeWidth="2.2" />
        <path d="M8 0.5V3M8 13V15.5M0.5 8H3M13 8H15.5M2.7 2.7L4.5 4.5M11.5 11.5L13.3 13.3M13.3 2.7L11.5 4.5M4.5 11.5L2.7 13.3" stroke="#444" strokeWidth="1.6" />
    </S>
);
const TreeMark = ({ c }) => (
    <g stroke={c} strokeWidth="1" fill="none">
        <path d="M12 12V24M12 18H18" />
    </g>
);
const AssemblyNavIcon = () => (
    <S s={24}>
        <Cube x={1} y={1} s={11} c={YEL} sw={0.6} />
        <path d="M16 12H23" stroke="#222" />
        <TreeMark c="#2430c8" />
        <Cube x={15} y={15} s={8} c={YEL} sw={0.6} />
    </S>
);
const ConstraintNavIcon = () => <ConstraintsIcon s={22} />;
const PartNavIcon = () => (
    <S s={24}>
        <path d="M2 4V11A5 2 0 0 0 12 11V4Z" fill="#c86aa8" stroke="#7c2c68" strokeWidth=".7" />
        <ellipse cx="7" cy="4" rx="5" ry="2" fill="#e6a8d0" stroke="#7c2c68" strokeWidth=".7" />
        <path d="M15 11H22" stroke="#222" />
        <path d="M7 14V23M7 18H13" stroke="#2430c8" />
        <circle cx="17" cy="18" r="3.5" fill="none" stroke="#8a2a78" />
        <circle cx="17" cy="18" r="1.2" fill="#8a2a78" />
    </S>
);
const BooksIcon = () => (
    <S s={26}>
        <path d="M1 8L6 3H9V23H1Z" fill="#f0983a" stroke="#a85c14" strokeWidth=".6" />
        <path d="M9 8L14 3H17V23H9Z" fill="#3cc040" stroke="#1a7a24" strokeWidth=".6" />
        <path d="M17 8L22 3H25V19L20 23H17Z" fill="#3a9ae0" stroke="#1a6ab0" strokeWidth=".6" />
        <path d="M1 8H9M9 8H17M17 8H25M3 12H7M11 12H15M19 12H23" stroke="#fff" strokeWidth=".6" />
    </S>
);
const InfoIcon = () => (
    <S s={26}>
        <circle cx="10" cy="16" r="8" fill="#1c7ad8" stroke="#0f4c98" strokeWidth=".6" />
        <text x="10" y="21" fontSize="14" fontWeight="700" textAnchor="middle" fill="#fff" fontFamily="Liberation Serif">i</text>
        <path d="M12 5A12 12 0 0 1 24 16M13 1A16 16 0 0 1 26 14" stroke="#2a70c8" strokeWidth="2.4" fill="none" />
    </S>
);
const WebDocIcon = () => (
    <S s={22}>
        <path d="M2 1H14L19 6V21H2Z" fill="#fff" stroke="#2a6ac8" strokeWidth="1.1" />
        <path d="M14 1V6H19" fill="#d8e6f8" stroke="#2a6ac8" strokeWidth=".8" />
        <circle cx="10.5" cy="13" r="6" fill="#3a9a5a" />
        <path d="M6 10Q9 8 11 10T15 12Q13 15 10 14T6 10Z" fill="#a8d8f0" />
    </S>
);
const WandIcon = () => (
    <S s={24}>
        <defs>
            <linearGradient id="rb" x1="0" y1="0" x2="0" y2="1">
                <stop offset="0" stopColor="#f02020" />
                <stop offset=".3" stopColor="#f0e020" />
                <stop offset=".55" stopColor="#20d030" />
                <stop offset=".8" stopColor="#20d0e0" />
                <stop offset="1" stopColor="#2020e0" />
            </linearGradient>
        </defs>
        <rect x="4" y="1" width="7" height="22" fill="url(#rb)" />
        <path d="M11 9L19 21" stroke="#222" strokeWidth="3" />
        <path d="M11 4L12 7L15 8L12 9L11 12L10 9L7 8L10 7Z" fill="#fff" />
    </S>
);
const BlueWandIcon = () => (
    <S s={24}>
        <path d="M3 20L5 4H10L11 8H22L16 14H12L15 18L8 17Z" fill="#dbe7fa" stroke="#2a6ac8" strokeWidth="1.1" />
        <path d="M3 22H10" stroke="#e8c020" strokeWidth="1.5" strokeDasharray="1 1" />
        <path d="M12 11L19 20" stroke="#222" strokeWidth="3" />
        <path d="M12 5L13 8L16 9L13 10L12 13L11 10L8 9L11 8Z" fill="#fff" />
    </S>
);
const ToolsIcon = () => (
    <S s={22}>
        <path d="M8 7L16 20" stroke="#888" strokeWidth="2.2" />
        <path d="M7 8L14 2L20 2L21 5L15 5L10 11Z" fill="#555" />
        <path d="M3 15L13 10M3 10Q1 13 3 16Q7 17 8 13" stroke="#666" strokeWidth="2" fill="none" />
        <path d="M2 18L9 15L12 20L5 21Z" fill="#ec8a2a" />
    </S>
);

/* ---------- status bar ---------- */
const StatusA = () => (
    <S>
        <path d="M2 13L6 3L15 2L12 14Z" fill="#d8d8d8" stroke="#999" strokeWidth=".7" />
        <path d="M5 6L13 9M4 10L12 5M8 3L9 14" stroke="#aaa" strokeWidth=".7" />
    </S>
);
const StatusB = () => (
    <S>
        <path d="M1 4V1H4M12 1H15V4M1 12V15H4M12 15H15V12" stroke="#555" fill="none" />
        <rect x="3.5" y="3.5" width="9" height="9" fill="#f4f6f8" stroke="#888" />
        <rect x="5" y="6" width="6" height="5" fill="#4a6fb0" />
    </S>
);

/* ---------- 3D model and triad, drawn in the viewport ---------- */
const Hole = ({ cx, cy }) => (
    <g>
        <ellipse cx={cx} cy={cy} rx="54" ry="32" fill="url(#holeG)" stroke="#222" strokeWidth="2" />
        <path d={`M${cx - 37} ${cy + 16}A46 22 0 0 1 ${cx + 37} ${cy + 16}`} fill="none" stroke="#fff" strokeWidth="3" />
        <path d={`M${cx - 37} ${cy + 19}A46 22 0 0 1 ${cx + 37} ${cy + 19}`} fill="none" stroke="#333" strokeWidth="1.5" />
    </g>
);

const ModelView = () => (
    <svg width="1153" height="549" viewBox="0 0 1153 549">
        <defs>
            <linearGradient id="cylG">
                <stop offset="0" stopColor="#6a797d" />
                <stop offset=".35" stopColor="#4f5a5e" />
                <stop offset=".6" stopColor="#566468" />
                <stop offset="1" stopColor="#7f9095" />
            </linearGradient>
            <linearGradient id="holeG">
                <stop offset="0" stopColor="#7d8e93" />
                <stop offset=".5" stopColor="#535f63" />
                <stop offset="1" stopColor="#5e6c70" />
            </linearGradient>
        </defs>
        <g transform="translate(477 53) scale(.33333)" strokeLinejoin="round">
            {/* base walls */}
            <path d="M75 835L265 945V1060L75 945Z" fill="#5f6d71" />
            <path d="M42 785Q42 815 75 835V945Q42 925 42 905Z" fill="#6e7d81" />
            <path d="M265 945Q340 975 415 945V1060Q340 1095 265 1060Z" fill="url(#cylG)" />
            <path d="M415 945L865 680V800L812 830V790L468 988V1033L415 1060Z" fill="#718287" />
            <path d="M865 680Q890 665 897 635V760Q890 785 865 800Z" fill="url(#cylG)" />
            <path d="M42 785V905Q45 925 75 945L265 1060Q340 1095 415 1060L468 1033V988L812 790V830L865 800Q890 785 897 760V635" fill="none" stroke="#555" strokeWidth="2" />
            <path d="M75 835V945M265 945V1060M415 945V1060M865 680V800" stroke="#1e2426" strokeWidth="2.5" />
            {/* base top */}
            <path d="M70 745L604 443L860 585Q897 605 895 635Q890 665 865 680L415 945Q340 975 265 945L75 835Q40 815 42 785Q45 760 70 745Z" fill="#c9e0e6" stroke="#1e2426" strokeWidth="2.5" />
            <Hole cx={148} cy={790} />
            <Hole cx={338} cy={900} />
            <Hole cx={790} cy={636} />
            {/* fillet ring and cylinder */}
            <ellipse cx="469" cy="708" rx="225" ry="134" fill="#d8e6ea" stroke="#4a5558" strokeWidth="2" />
            <ellipse cx="469" cy="703" rx="219" ry="130" fill="#f5f8f9" stroke="#667" strokeWidth="1.5" />
            <path d="M256 265V697A214 129 0 0 0 684 697V265Z" fill="url(#cylG)" stroke="#1e2426" strokeWidth="2" />
            <ellipse cx="470" cy="265" rx="214" ry="125" fill="#c9e0e6" stroke="#1e2426" strokeWidth="2.5" />
            {/* square post */}
            <rect x="362" y="155" width="215" height="173" fill="#596568" stroke="#59666a" strokeWidth="2" />
            <rect x="362" y="32" width="215" height="123" fill="#c9e0e6" stroke="#4a5558" strokeWidth="2" />
            <ellipse cx="469" cy="94" rx="75" ry="44" fill="url(#holeG)" stroke="#1e2426" strokeWidth="2" />
        </g>
        {/* triad */}
        <g transform="translate(-213 -167)">
            <path d="M274 643L287 650V664L274 671L261 664V650Z" fill="#d4d6d6" stroke="#b5b8b8" />
            <path d="M261 650L274 657L287 650M274 657V671M274 643V657M261 664L274 657L287 664" stroke="#c0c3c3" fill="none" strokeWidth=".8" />
            <path d="M262 664L287 650" stroke="#a8c8a0" strokeWidth="1" />
            <path d="M260 665V642" stroke="#1434b8" strokeWidth="2" />
            <path d="M257 644L260 637L263 644Z" fill="#1434b8" />
            <path d="M260 665L282 677" stroke="#d02020" strokeWidth="2" />
            <path d="M279 679L286 680L282 674Z" fill="#d02020" />
            <path d="M286 648L289 646" stroke="#20a030" strokeWidth="1.4" />
            <circle cx="260" cy="665" r="3.6" fill="#c8c8c8" stroke="#999" strokeWidth=".5" />
            <text x="256.500" y="635" fontSize="11" fill="#2a6ad8" fontFamily="Liberation Sans">Z</text>
            <text x="283" y="686" fontSize="11" fill="#d83030" fontFamily="Liberation Sans">X</text>
        </g>
    </svg>
);

/* ---------- data ---------- */
// turn a list of [centre, kind, icon, on] into margins so that items land on their centres
const widths = { icon: 22, drop: 8, sep: 1 };
const placed = (items, startX) => {
    let x = startX;
    return items.map(([c, kind, icon, on]) => {
        const w = widths[kind];
        const ml = c - w / 2 - x;
        x = c + w / 2;
        return { w, ml, kind, icon, on };
    });
};

const quick = placed([
    [59, 'icon', <SaveIcon />], [74, 'sep'],
    [88, 'icon', <UndoIcon />], [106, 'drop'], [123, 'icon', <UndoIcon off />], [137, 'sep'],
    [152, 'icon', <CutIcon />], [175, 'icon', <CopyIcon />], [198, 'icon', <PasteIcon />], [212, 'sep'],
    [226, 'icon', <SaveIcon />], [245, 'drop'], [253, 'sep'],
    [268, 'icon', <EraserIcon />], [282, 'sep'],
], 41);

const tools = placed([
    [361, 'icon', <GreyWire />], [387, 'icon', <GreyFunnelIcon />], [407, 'icon', <BoxedFilterIcon />],
    [425, 'drop'], [446, 'icon', <GreyArrowIcon />], [467, 'icon', <GreyBoxes />], [495, 'icon', <DashedIcon />],
    [513, 'drop'], [532, 'icon', <BoxGreyIcon />], [557, 'icon', <ViewCubeIcon />],
    [581, 'icon', <SnapAllIcon />, true], [608, 'icon', <SnapLine />, true], [632, 'icon', <SnapLine k="mid" />, true],
    [657, 'icon', <SnapCurveIcon />], [683, 'icon', <ZigIcon />, true], [708, 'icon', <WaveIcon />, true],
    [732, 'icon', <TangentIcon />], [758, 'icon', <TargetIcon />, true], [782, 'icon', <QuadIcon />],
    [808, 'icon', <CrossIcon />, true], [832, 'icon', <SnapLine k="mid" />, true], [856, 'icon', <SurfPointIcon />],
    [881, 'icon', <GridPtIcon />], [900, 'sep'], [921, 'icon', <ZoomRegionIcon />], [946, 'icon', <PanIcon />],
    [970, 'icon', <RotateIcon />], [996, 'icon', <OrientIcon />], [1014, 'drop'], [1033, 'icon', <ShadeIcon />],
    [1050, 'drop'], [1070, 'icon', <BigCubeIcon />], [1088, 'drop'], [1105, 'icon', <RenderModeIcon />],
    [1124, 'drop'], [1137, 'sep'],
], 345);

const tabs = ['Assemblies', 'Curve', 'Surface', 'Analysis', 'View', 'Render', 'Tools', 'Application'];

// [margin above, height, icon, active]
const rail = [
    [0, 26, <GearIcon />], [15, 44, <AssemblyNavIcon />], [0, 40, <ConstraintNavIcon />], [0, 45, <PartNavIcon />, true],
    [0, 40, <BooksIcon />], [15, 40, <InfoIcon />], [13, 40, <WebDocIcon />], [13, 40, <ClockIcon s={24} />],
    [4, 40, <WandIcon />], [1, 40, <BlueWandIcon />], [2, 40, <ToolsIcon />],
];

const kids = [
    ['Datum Coordina', <DatumCsysIcon />, { muted: true }],
    ['Block (1)', <BlockIcon />], ['Cylinder (2)', <CylinderIcon />], ['Block (3)', <BlockIcon />],
    ['Unite (4)', <UniteIcon />], ['Edge Blend (5)', <EdgeBlendSmall />], ['Edge Blend (6)', <EdgeBlendSmall />],
    ['Cylinder (7)', <CylinderIcon />], ['Cylinder (8)', <CylinderIcon />],
    ['Pattern Feature [', <PatternIcon />, { exp: true }], ['Block (10)', <BlockIcon />],
    ['Cylinder (11)', <CylinderIcon />], ['Sphere (12)', <SphereIcon />], ['Cylinder (13)', <CylinderIcon />],
    ['Cylinder (14)', <CylinderIcon />], ['Cone (15)', <ConeIcon />, { bold: true, last: true }],
];

const Small = ({ icon, children, caret }) => (
    <SmallRow>{icon}<span>{children}</span>{caret && <Caret $ml={3} />}</SmallRow>
);

const Big = ({ w, ml, icon, lines, caret, disabled }) => (
    <BigButton $w={w} $ml={ml} $disabled={disabled}>
        <BigIcon>{icon}</BigIcon>
        {lines.map((l, i) => (
            <BigLabel key={l}>{l}{caret === 'inline' && i === lines.length - 1 && <Caret $ml={3} style={{ verticalAlign: 'middle' }} />}</BigLabel>
        ))}
        {caret === 'below' && <CaretRow><Caret /></CaretRow>}
    </BigButton>
);

const MoreButton = ({ ml, icon }) => (
    <More $ml={ml}>
        <MoreBox>{icon}</MoreBox>
        More
        <CaretRow><Caret /></CaretRow>
    </More>
);

const Placed = ({ items, Comp = Slot }) => items.map((it, i) => {
    if (it.kind === 'sep') return <VSep key={i} $ml={it.ml} />;
    if (it.kind === 'drop') return <Slot key={i} $w={it.w} $ml={it.ml}><Caret /></Slot>;
    return <Comp key={i} $w={it.w} $ml={it.ml} $on={it.on}>{it.icon}</Comp>;
});

export default function App() {
    return (
        <Page>
            <GlobalStyle />
            <TitleBar>
                <QuickAccess>
                    <Logo>NX</Logo>
                    <VSep />
                    <Placed items={quick} />
                    <Slot $w={16} $ml={6}><SwitchWinIcon /></Slot>
                    <QatText $ml={5}>Switch Window</QatText>
                    <Slot $w={16} $ml={6}><WindowIcon /></Slot>
                    <QatText $ml={4}>Window</QatText>
                    <Caret $ml={3} />
                    <MenuCaret><Caret /></MenuCaret>
                </QuickAccess>
                <WindowTitle>NX 11 - Modeling - [5.prt]</WindowTitle>
                <Siemens>SIEMENS</Siemens>
                <WinButtons>
                    <MinIcon />
                    <RestoreIcon />
                    <CloseIcon />
                </WinButtons>
            </TitleBar>

            <TabBar>
                <FileTab>File</FileTab>
                <Tab $active>Home</Tab>
                {tabs.map(t => <Tab key={t}>{t}</Tab>)}
                <TabRight>
                    <Search>Find a Command<MagnifierIcon /></Search>
                    <Slot $w={16} $ml={12}><FullIcon /></Slot>
                    <Slot $w={14} $ml={12}><ChevUpIcon /></Slot>
                    <Slot $w={14} $ml={11}><HelpIcon /></Slot>
                    <Slot $w={14} $ml={8}><MinIcon /></Slot>
                    <Slot $w={14} $ml={6}><RestoreIcon c="#111" /></Slot>
                    <Slot $w={14} $ml={8}><CloseIcon c="#111" w={2} /></Slot>
                </TabRight>
            </TabBar>

            <Ribbon>
                <Group $w={179}>
                    <GroupBody>
                        <Big w={59} icon={<SketchIcon />} lines={['Sketch']} />
                        <Gallery>
                            <ProfileG /><RectG /><LineG /><ArcG /><CircleG /><PlusG />
                        </Gallery>
                        <GalleryScroll>
                            <Caret $color="#bbb" style={{ transform: 'rotate(180deg)' }} />
                            <Caret />
                            <MenuCaret style={{ marginLeft: 0 }}><Caret /></MenuCaret>
                        </GalleryScroll>
                    </GroupBody>
                    <GroupLabel>Direct Sketch</GroupLabel>
                    <Launcher><Caret /></Launcher>
                </Group>
                <GroupDivider />
                <Group $w={424}>
                    <GroupBody>
                        <Big w={50} ml={5} icon={<DatumIcon />} lines={['Datum', 'Plane']} caret="inline" />
                        <Big w={42} icon={<ExtrudeIcon />} lines={['Extrude']} caret="below" />
                        <Big w={46} icon={<HoleIcon />} lines={['Hole']} />
                        <SmallColumn $w={102} $ml={3}>
                            <Small icon={<PatternIcon />}>Pattern Feature</Small>
                            <Small icon={<UniteIcon />} caret>Unite</Small>
                            <Small icon={<ShellIcon />}>Shell</Small>
                        </SmallColumn>
                        <Big w={50} ml={1} icon={<EdgeBlendIcon />} lines={['Edge', 'Blend']} caret="inline" />
                        <SmallColumn $w={76} $ml={2}>
                            <Small icon={<ChamferIcon />}>Chamfer</Small>
                            <Small icon={<TrimIcon />}>Trim Body</Small>
                            <Small icon={<DraftIcon />}>Draft</Small>
                        </SmallColumn>
                        <MoreButton ml={5} icon={<FeatureMoreIcon />} />
                    </GroupBody>
                    <GroupLabel>Feature</GroupLabel>
                    <Launcher><Caret /></Launcher>
                </Group>
                <GroupDivider />
                <Group $w={198}>
                    <GroupBody>
                        <Big w={51} ml={2} icon={<MoveFaceIcon />} lines={['Move', 'Face']} />
                        <SmallColumn $w={96} $ml={0}>
                            <Small icon={<OffsetIcon />}>Offset Region</Small>
                            <Small icon={<ReplaceIcon />}>Replace Face</Small>
                            <Small icon={<DeleteIcon />}>Delete Face</Small>
                        </SmallColumn>
                        <MoreButton ml={7} icon={<SyncMoreIcon />} />
                    </GroupBody>
                    <GroupLabel>Synchronous Modeling</GroupLabel>
                    <Launcher><Caret /></Launcher>
                </Group>
                <GroupDivider />
                <Group $w={236}>
                    <GroupBody>
                        <Big w={79} ml={2} icon={<CurveMeshIcon />} lines={['Through', 'Curve Mesh']} />
                        <SmallColumn $w={108} $ml={0}>
                            <Small icon={<ThroughCurvesIcon />}>Through Curves</Small>
                            <Small icon={<SweptIcon />}>Swept</Small>
                            <Small icon={<FillIcon />}>Fill Surface</Small>
                        </SmallColumn>
                        <MoreButton ml={4} icon={<SurfaceMoreIcon />} />
                    </GroupBody>
                    <GroupLabel>Surface</GroupLabel>
                    <Launcher><Caret /></Launcher>
                </Group>
                <GroupDivider />
                <Group $w={248}>
                    <GroupBody>
                        <Big w={60} ml={5} disabled icon={<WorkOnIcon />} lines={['Work on', 'Assembly']} />
                        <Big w={36} ml={0} icon={<AddIcon />} lines={['Add']} caret="below" />
                        <SmallColumn $w={132} $ml={8}>
                            <Small icon={<ConstraintsIcon s={16} />}>Assembly Constraints</Small>
                            <Small icon={<MoveCompIcon />}>Move Component</Small>
                            <Small icon={<PatternCompIcon />}>Pattern Component</Small>
                        </SmallColumn>
                    </GroupBody>
                    <GroupLabel>Assemblies</GroupLabel>
                    <Launcher $r={7}><Caret /></Launcher>
                </Group>
                <GroupDivider />
                <Launcher $r={5}><Caret /></Launcher>
            </Ribbon>

            <SelectionBar>
                <MenuButton>
                    <MenuIco />
                    <span><u>M</u>enu</span>
                    <Caret $ml={2} />
                </MenuButton>
                <VSep $h={22} />
                <FilterSelect $w={120} $ml={12}>No Selection Filter<Caret /></FilterSelect>
                <FilterSelect $w={127} $ml={10}>Entire Assembly<Caret /></FilterSelect>
                <Placed items={tools} Comp={ToolSlot} />
                <BarEnd><Caret /></BarEnd>
            </SelectionBar>

            <Main>
                <Rail>
                    {rail.map(([mt, h, icon, active], i) => (
                        <RailItem key={i} $mt={mt} $h={h} $active={active}>{icon}</RailItem>
                    ))}
                </Rail>
                <Navigator>
                    <NavHead>
                        Part Navigator
                        <svg width="12" height="11" viewBox="0 0 12 11">
                            <rect x=".5" y=".5" width="11" height="10" fill="#fff" stroke="#222" />
                            <rect x=".5" y=".5" width="11" height="2" fill="#222" />
                        </svg>
                    </NavHead>
                    <TreeBox>
                        <TreeHead>Name<UpCaret /></TreeHead>
                        <TreeRows>
                            <TreeRow $pad={19}>
                                <GuideV $x={9} $y={10} $h={10} /><GuideH $x={9} $w={10} />
                                <ClockIcon /><RowText>History Mode</RowText>
                            </TreeRow>
                            <TreeRow $pad={19} $alt>
                                <GuideV $x={9} $y={0} $h={20} /><GuideH $x={9} $w={10} /><Expander $x={5}>+</Expander>
                                <ViewsIcon /><RowText>Model Views</RowText>
                            </TreeRow>
                            <TreeRow $pad={21}>
                                <GuideV $x={9} $y={0} $h={20} /><GuideH $x={9} $w={10} /><Expander $x={5}>+</Expander>
                                <CheckBox><BareCheck /></CheckBox><CameraIcon /><RowText>Cameras</RowText>
                            </TreeRow>
                            <TreeRow $pad={19} $alt>
                                <GuideV $x={9} $y={0} $h={10} /><GuideH $x={9} $w={10} /><GuideV $x={28} $y={12} $h={8} /><Expander $x={5}>−</Expander>
                                <FolderIcon /><RowText>Model History</RowText>
                            </TreeRow>
                            {kids.map(([label, icon, o = {}], i) => (
                                <TreeRow key={label} $pad={40} $alt={i % 2 === 1} $muted={o.muted} $bold={o.bold}>
                                    <GuideV $x={28} $y={0} $h={o.last ? 10 : 20} /><GuideH $x={28} $w={12} />
                                    {o.exp && <Expander $x={24}>+</Expander>}
                                    <CheckBox><GreenCheck /></CheckBox>{icon}<RowText>{label}</RowText>
                                </TreeRow>
                            ))}
                            <TreeRow $pad={40} />
                            <TreeRow $pad={40} $alt />
                            <TreeRow $pad={40} />
                            <TreeRow $pad={40} $alt />
                        </TreeRows>
                        <ScrollBar>
                            <ScrollThumb />
                            <svg width="7" height="10" viewBox="0 0 7 10"><path d="M5.5 1L1.500 5L5.5 9" fill="none" stroke="#555" strokeWidth="1.6" /></svg>
                            <svg width="7" height="10" viewBox="0 0 7 10"><path d="M1.500 1L5.5 5L1.500 9" fill="none" stroke="#555" strokeWidth="1.6" /></svg>
                        </ScrollBar>
                    </TreeBox>
                    <SplitBar />
                </Navigator>
                <Canvas><ModelView /></Canvas>
            </Main>
            <StatusBar>
                <StatusA />
                <StatusB />
            </StatusBar>
        </Page>
    );
}
